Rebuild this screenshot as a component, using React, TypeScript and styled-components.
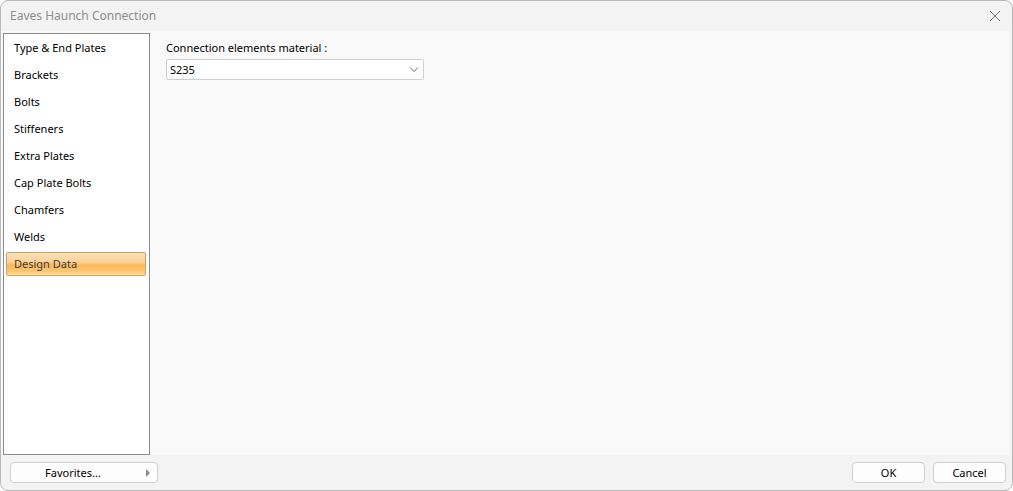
import React from "react";
import styled, { createGlobalStyle } from "styled-components";

const Global = createGlobalStyle`
  html, body { margin: 0; padding: 0; background: #ffffff; }
  body { font-family: "Noto Sans", "Open Sans", sans-serif; }
  * { box-sizing: border-box; }
`;

const Window = styled.div`
  width: 1013px;
  height: 491px;
  border: 1px solid #b9b9b9;
  border-radius: 8px;
  background: #f3f3f3;
  display: flex;
  flex-direction: column;
  overflow: hidden;
`;

const TitleBar = styled.div`
  height: 30px;
  flex: none;
  display: flex;
  align-items: center;
  justify-content: space-between;
  padding: 0 10px 1px 9px;
  color: #8d8d8d;
  font-size: 12px;
`;

const Close = styled.button`
  border: 0;
  background: none;
  padding: 0;
  width: 14px;
  height: 14px;
  display: flex;
  align-items: center;
  justify-content: center;
`;

const Body = styled.div`
  flex: 1;
  display: flex;
  padding: 1px 3px 0 2px;
  background: #f9f9f9;
  margin-right: 3px;
  min-height: 0;
`;

const Sidebar = styled.ul`
  width: 147px;
  flex: none;
  margin: 1px 0 0 0;
  padding: 2px 2px 0 2px;
  list-style: none;
  background: #ffffff;
  border: 1px solid #8c8c8c;
  display: flex;
  flex-direction: column;
  gap: 3px;
`;

const Item = styled.li<{ $active?: boolean }>`
  height: 24px;
  display: flex;
  align-items: center;
  padding: 0 8px 1px 7px;
  font-size: 11px;
  color: ${(p) => (p.$active ? "#3b3b3b" : "#000000")};
  border: 1px solid ${(p) => (p.$active ? "#c9a266" : "transparent")};
  border-radius: 2px;
  margin-right: 1px;
  background: ${(p) =>
    p.$active
      ? "linear-gradient(to bottom, #fde1b6 0%, #fcd29a 40%, #fbb959 55%, #fcc878 85%, #fde3a8 100%)"
      : "transparent"};
`;

const Content = styled.div`
  flex: 1;
  padding: 7px 16px;
  display: flex;
  flex-direction: column;
  gap: 4px;
`;

const Label = styled.div`
  font-size: 11px;
  color: #000;
  height: 16px;
  display: flex;
  align-items: center;
`;

const Select = styled.div`
  width: 258px;
  height: 21px;
  background: #ffffff;
  border: 1px solid #cfcfcf;
  border-radius: 2px;
  display: flex;
  align-items: center;
  justify-content: space-between;
  padding: 0 4px 0 3px;
  font-size: 11px;
  color: #000;
`;

const Footer = styled.div`
  height: 35px;
  flex: none;
  display: flex;
  align-items: flex-start;
  justify-content: space-between;
  padding: 7px 6px 0 9px;
`;

const Button = styled.button<{ $w: number; $menu?: boolean }>`
  width: ${(p) => p.$w}px;
  height: 21px;
  background: #fdfdfd;
  border: 1px solid #d0d0d0;
  border-radius: 4px;
  font-family: inherit;
  font-size: 11px;
  color: #000;
  display: flex;
  align-items: center;
  justify-content: center;
  position: relative;
  padding: 0 ${(p) => (p.$menu ? "22px" : "0")} 0 0;
`;

const Arrow = styled.span`
  position: absolute;
  right: 7px;
  top: 6px;
  width: 0;
  height: 0;
  border-top: 4px solid transparent;
  border-bottom: 4px solid transparent;
  border-left: 4px solid #8a8a8a;
`;

const Actions = styled.div`
  display: flex;
  gap: 8px;
`;

const items = [
  "Type & End Plates",
  "Brackets",
  "Bolts",
  "Stiffeners",
  "Extra Plates",
  "Cap Plate Bolts",
  "Chamfers",
  "Welds",
  "Design Data",
];

export default function App() {
  return (
    <>
      <Global />
      <Window>
        <TitleBar>
          <span>Eaves Haunch Connection</span>
          <Close aria-label="Close">
            <svg width="12" height="12" viewBox="0 0 12 12">
              <path d="M1 1L11 11M11 1L1 11" stroke="#7a7a7a" strokeWidth="1" />
            </svg>
          </Close>
        </TitleBar>
        <Body>
          <Sidebar>
            {items.map((t) => (
              <Item key={t} $active={t === "Design Data"}>
                {t}
              </Item>
            ))}
          </Sidebar>
          <Content>
            <Label>Connection elements material :</Label>
            <Select>
              <span>S235</span>
              <svg width="10" height="6" viewBox="0 0 10 6">
                <path d="M1 0.5L5 4.5L9 0.5" stroke="#6a6a6a" strokeWidth="1" fill="none" />
              </svg>
            </Select>
          </Content>
        </Body>
        <Footer>
          <Button $w={148} $menu>
            Favorites...
            <Arrow />
          </Button>
          <Actions>
            <Button $w={73}>OK</Button>
            <Button $w={73}>Cancel</Button>
          </Actions>
        </Footer>
      </Window>
    </>
  );
}
